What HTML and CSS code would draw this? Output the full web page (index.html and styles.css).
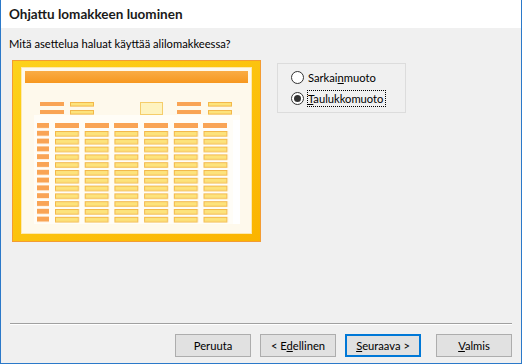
FILE: index.html
```html
<!DOCTYPE html>
<html lang="fi">
<head>
  <meta charset="UTF-8">
  <title>Ohjattu lomakkeen luominen</title>
  <link rel="stylesheet" href="styles.css">
</head>
<body>
  <div class="window">
    <div class="header">
      <h1 class="title">Ohjattu lomakkeen luominen</h1>
    </div>
    <div class="content">
      <p class="question">Mitä asettelua haluat käyttää alilomakkeessa?</p>
      <div class="row">
        <div class="preview">
          <svg width="250" height="183" viewBox="0 0 250 183">
            <defs>
              <linearGradient id="frame" x1="0" y1="0" x2="1" y2="1">
                <stop offset="0" stop-color="#fdd21c"/>
                <stop offset="1" stop-color="#fbb400"/>
              </linearGradient>
              <linearGradient id="bar" x1="0" y1="0" x2="0" y2="1">
                <stop offset="0" stop-color="#f9ac45"/>
                <stop offset="1" stop-color="#f7981f"/>
              </linearGradient>
              <pattern id="cells" x="43" y="71" width="29.7" height="7.8" patternUnits="userSpaceOnUse">
                <rect x="0.5" y="0.5" width="23" height="4.6" fill="#fde37c" stroke="#f3b84a" stroke-width="1"/>
              </pattern>
              <pattern id="heads" x="25" y="63" width="12" height="7.8" patternUnits="userSpaceOnUse">
                <rect x="0" y="0" width="12" height="5" fill="#f9a455"/>
              </pattern>
            </defs>
            <rect x="0.5" y="0.5" width="248" height="181" fill="url(#frame)" stroke="#f39c33"/>
            <rect x="9.5" y="7.5" width="230" height="166" fill="#fef9ec" stroke="#fde9b0"/>
            <rect x="13" y="11" width="223" height="12" fill="url(#bar)"/>
            <rect x="22" y="55" width="206" height="109" fill="#fffdf7"/>
            <rect x="221" y="60" width="7" height="104" fill="#ffffff"/>
            <rect x="28" y="42" width="24" height="4" fill="#f9a455"/>
            <rect x="28" y="50" width="24" height="4" fill="#f9a455"/>
            <rect x="58.5" y="42.5" width="23" height="3.6" fill="#fde37c" stroke="#f3b84a"/>
            <rect x="58.5" y="50.5" width="23" height="3.6" fill="#fde37c" stroke="#f3b84a"/>
            <rect x="128.5" y="42.5" width="22" height="12" fill="#fef3bf" stroke="#f5cd6a"/>
            <rect x="165" y="42" width="24" height="4" fill="#f9a455"/>
            <rect x="165" y="50" width="24" height="4" fill="#f9a455"/>
            <rect x="196.5" y="42.5" width="23" height="3.6" fill="#fde37c" stroke="#f3b84a"/>
            <rect x="196.5" y="50.5" width="23" height="3.6" fill="#fde37c" stroke="#f3b84a"/>
            <rect x="25" y="63" width="12" height="101" fill="url(#heads)"/>
            <rect x="43" y="63" width="24" height="5" fill="#f9a455"/>
            <rect x="73" y="63" width="24" height="5" fill="#f9a455"/>
            <rect x="102" y="63" width="24" height="5" fill="#f9a455"/>
            <rect x="132" y="63" width="24" height="5" fill="#f9a455"/>
            <rect x="162" y="63" width="24" height="5" fill="#f9a455"/>
            <rect x="191" y="63" width="24" height="5" fill="#f9a455"/>
            <rect x="43" y="71" width="178" height="93" fill="url(#cells)"/>
          </svg>
        </div>
        <fieldset class="layout-choice">
          <label class="option">
            <span class="radio"></span>
            <span>Sarkai<u>n</u>muoto</span>
          </label>
          <label class="option">
            <span class="radio checked"></span>
            <span class="focus"><u>T</u>aulukkomuoto</span>
          </label>
        </fieldset>
      </div>
    </div>
    <div class="footer">
      <div class="buttons">
        <button class="btn">Peruuta</button>
        <button class="btn">&lt; E<u>d</u>ellinen</button>
        <button class="btn btn-default"><u>S</u>euraava &gt;</button>
        <button class="btn btn-last"><u>V</u>almis</button>
      </div>
    </div>
  </div>
</body>
</html>
```

FILE: styles.css
```css
* {
  box-sizing: border-box;
}

body {
  margin: 0;
  font-family: Lato, "Noto Sans", sans-serif;
  font-size: 11.2px;
  color: #000;
}

.window {
  width: 522px;
  height: 364px;
  display: flex;
  flex-direction: column;
  background-color: #f0f0f0;
  border: 1px solid #2b79c9;
  border-top: none;
}

.header {
  height: 28px;
  background-color: #fff;
  padding-left: 8px;
  display: flex;
  align-items: center;
}

.title {
  margin: 0;
  font-size: 13.5px;
  font-weight: 700;
  color: #1a1a1a;
}

.content {
  flex: 1;
  padding: 0 0 0 8px;
}

.question {
  margin: 8px 0 0;
  line-height: 16px;
}

.row {
  display: flex;
  align-items: flex-start;
  margin-top: 8px;
}

.preview {
  margin-left: 3px;
  width: 250px;
  height: 183px;
}

.preview svg {
  display: block;
}

.layout-choice {
  margin: 3px 0 0 15px;
  width: 129px;
  height: 50px;
  padding: 6px 0 0 13px;
  border: 1px solid #dcdcdc;
  display: flex;
  flex-direction: column;
  gap: 6px;
}

.option {
  display: flex;
  align-items: center;
  gap: 4px;
  line-height: 15px;
}

.radio {
  width: 13px;
  height: 13px;
  border: 1px solid #333;
  border-radius: 50%;
  background-color: #fff;
  position: relative;
}

.radio.checked::after {
  content: "";
  position: absolute;
  left: 2px;
  top: 2px;
  width: 7px;
  height: 7px;
  border-radius: 50%;
  background-color: #333;
}

.focus {
  outline: 1px dotted #000;
  padding-right: 2px;
}

.footer {
  padding: 0 9px 6px 9px;
}

.buttons {
  border-top: 1px solid #a0a0a0;
  box-shadow: inset 0 1px 0 #fff;
  padding: 10px 0 0;
  display: flex;
  justify-content: flex-end;
  gap: 9px;
}

.btn {
  width: 76px;
  height: 23px;
  font-family: inherit;
  font-size: 11.2px;
  background-color: #e1e1e1;
  border: 1px solid #adadad;
  padding: 0;
  color: #000;
}

.btn-default {
  border-color: #0078d7;
  box-shadow: inset 0 0 0 1px #0078d7;
}

.btn-last {
  margin-left: 6px;
}
```
